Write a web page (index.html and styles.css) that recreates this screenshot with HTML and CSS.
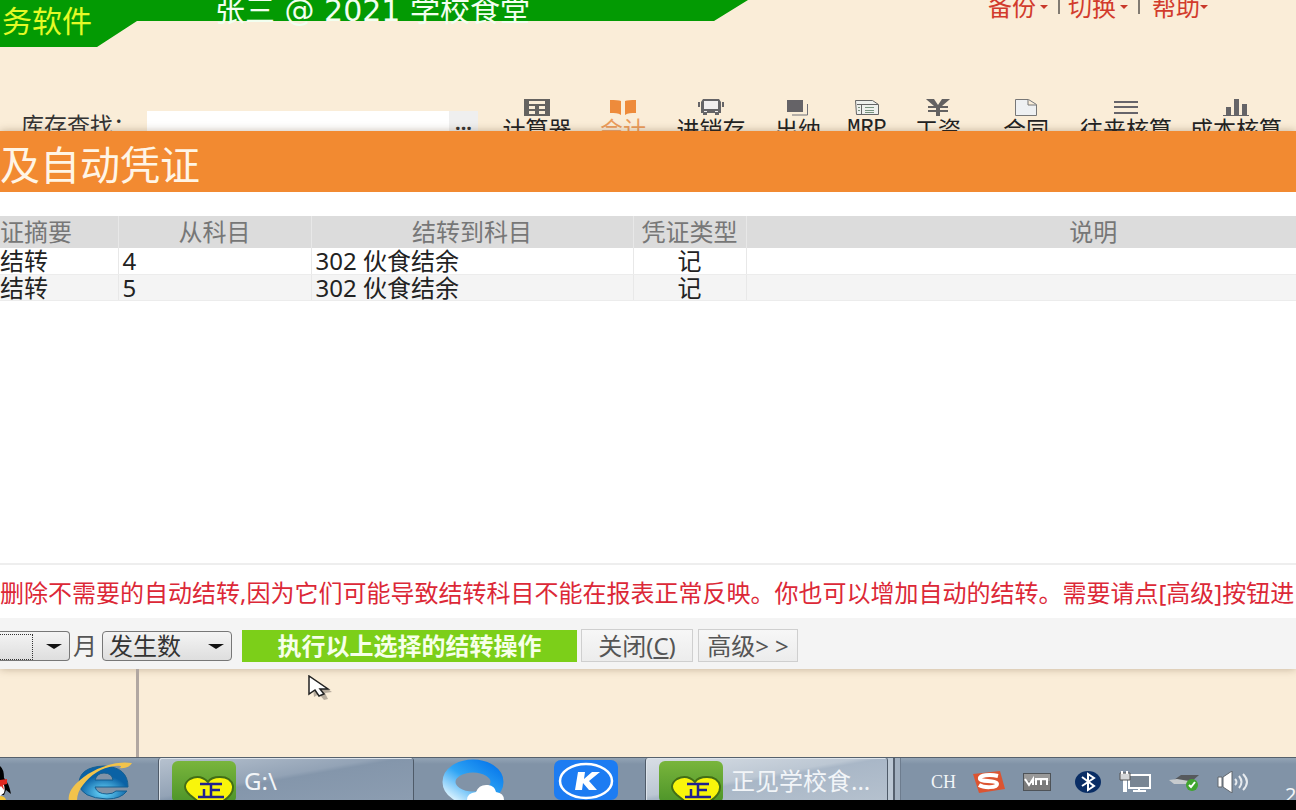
FILE: index.html
```html
<!DOCTYPE html>
<html lang="zh-CN">
<head>
<meta charset="utf-8">
<title>学校食堂财务软件</title>
<link rel="stylesheet" href="styles.css">
</head>
<body>
<div class="desktop">
  <header class="top">
    <div class="banner">
      <span class="brand">务软件</span>
      <span class="account">张三 @ 2021 学校食堂</span>
    </div>
    <nav class="links">
      <a href="#backup">备份<i class="caret"></i></a>
      <a href="#switch">切换<i class="caret"></i></a>
      <a href="#help">帮助<i class="caret"></i></a>
    </nav>
  </header>

  <div class="toolrow">
    <form class="search">
      <label for="stock">库存查找：</label>
      <input id="stock" type="text">
      <button type="button" class="more">...</button>
    </form>
    <nav class="modules">
      <a href="#calc"><svg width="26" height="17" viewBox="0 0 26 17"><path fill="#656360" d="M0 0h26v17H0z"/><path fill="#faedd8" d="M5 2h16v3H5zM5 7h6v3H5zM15 7h6v3h-6zM5 12h6v3H5zM15 12h6v3h-6z"/></svg><span>计算器</span></a>
      <a href="#acct" class="current"><svg width="26" height="17" viewBox="0 0 26 17"><path fill="#ee8b3b" d="M0 1c5 0 9 0 11 1v14c-3-2-6-2-11-2zM26 1c-5 0-9 0-11 1v14c3-2 6-2 11-2z"/></svg><span>会计</span></a>
      <a href="#stock"><svg width="26" height="17" viewBox="0 0 26 17"><path fill="#656467" d="M5 0h16l2 3v11h-2v2h-4v-2H9v2H5v-2H3V3zM0 3h2v5H0zM24 3h2v5h-2z"/><path fill="#f1eeee" d="M6 2h14v8H6zM6 12h3v1H6zM17 12h3v1h-3z"/></svg><span>进销存</span></a>
      <a href="#cash"><svg width="22" height="17" viewBox="0 0 22 17"><path fill="#656367" d="M0 1h16v12H0z"/><path fill="none" stroke="#707078" d="M20.500 5v11H5"/></svg><span>出纳</span></a>
      <a href="#mrp" class="mono"><svg width="24" height="17" viewBox="0 0 24 17"><path fill="#eef0ed" stroke="#656565" d="M.5 1.500h17l6 4v10h-22zM2 5.500h21M6.500 6v9"/><path stroke="#78937e" d="M3 8.500h2M3 11.500h2M10 8.500h9M10 11.500h9M10 13.500h9"/></svg><span>MRP</span></a>
      <a href="#wage"><svg width="24" height="17" viewBox="0 0 24 17"><path fill="#636161" d="M0 0h8l4 6 4-6h8l-1 1-7 6h6v2h-8v2h8v2h-8v4h-4v-4H2v-2h8V9H2V7h6L1 1z"/></svg><span>工资</span></a>
      <a href="#contract"><svg width="22" height="17" viewBox="0 0 22 17"><path fill="#eef0f2" stroke="#777" d="M.5.500h13l8 5v11H.500zM13 1v5h8"/></svg><span>合同</span></a>
      <a href="#contacts"><svg width="24" height="17" viewBox="0 0 24 17"><path stroke="#66646a" stroke-width="2" d="M0 3h24M0 8h24M0 14h24"/></svg><span>往来核算</span></a>
      <a href="#cost"><svg width="26" height="17" viewBox="0 0 26 17"><path fill="#656467" d="M0 16h26v1H0zM3 8h5v8H3zM11 0h5v16h-5zM19 5h5v11h-5z"/></svg><span>成本核算</span></a>
    </nav>
  </div>

  <main class="dialog">
    <h1>及自动凭证</h1>
    <div class="grid">
      <table>
        <colgroup><col class="c-brief"><col class="c-from"><col class="c-to"><col class="c-type"><col></colgroup>
        <thead><tr><th class="first">证摘要</th><th>从科目</th><th>结转到科目</th><th>凭证类型</th><th>说明</th></tr></thead>
        <tbody>
          <tr><td class="first">结转</td><td>4</td><td>302 伙食结余</td><td class="mid">记</td><td></td></tr>
          <tr><td class="first">结转</td><td>5</td><td>302 伙食结余</td><td class="mid">记</td><td></td></tr>
        </tbody>
      </table>
    </div>
    <p class="note">删除不需要的自动结转,因为它们可能导致结转科目不能在报表正常反映。你也可以增加自动的结转。需要请点[高级]按钮进</p>
    <div class="actions">
      <span class="picker month"><select id="month"><option></option></select></span>
      <label for="month">月</label>
      <span class="picker kind"><select aria-label="取数方式"><option>发生数</option></select></span>
      <button type="button" class="run">执行以上选择的结转操作</button>
      <button type="button" class="plain close">关闭(<u>C</u>)</button>
      <button type="button" class="plain adv">高级&gt; &gt;</button>
    </div>
  </main>

  <section class="workspace">
    <div class="side"></div>
    <svg class="cursor" width="26" height="26" viewBox="0 0 26 26"><path fill="#8b8177" opacity=".6" d="M4 3l20 14-7 1 3 6-4 1-5-6-5 3z"/><path fill="#fff" stroke="#222" stroke-width="1.500" d="M1 1v18l6-4 4 6 5-2-4-5h8z"/></svg>
  </section>

  <footer class="taskbar">
    <svg class="penguin" width="12" height="43" viewBox="0 0 12 43"><path d="M0 8q4 3 4 12 5 5 7 16l-5-4-2 5H0z"/><path fill="#fff" d="M0 24h2q4 5 2 11l-4 3z"/><path fill="#e12920" d="M0 22l7-1v5l-4 1 1 5-3-4-1 1z"/><path fill="#f2c43b" d="M0 38q5 0 6 4H0z"/></svg>
    <svg class="ie" width="66" height="43" viewBox="0 0 66 43"><defs><radialGradient id="b" cy=".8"><stop stop-color="#6fdcff"/><stop offset="1" stop-color="#0b62a5"/></radialGradient></defs><path fill="url(#b)" stroke="#155f91" d="M60 29H27q2 7 12 7 6 0 9-3h11q-6 8-20 8Q13 40 11 26 11 9 36 8q24 1 24 21zM27 22h18q-1-7-9-7-7 0-9 7z"/><path fill="#f2c34b" d="M1 43Q-2 31 20 16 43 2 64 5q-3 6-13 5 6-3-5-2Q27 11 15 27 9 34 9 43z"/></svg>
    <button type="button" class="task folder">
      <svg width="64" height="42" viewBox="0 0 64 42"><use href="#zheng"/></svg><span>G:\</span>
    </button>
    <svg class="qb" width="64" height="42" viewBox="0 0 64 42"><defs><linearGradient id="q" x1="1" x2="0" y2="1"><stop stop-color="#0879ec"/><stop offset=".5" stop-color="#2ea4f4"/><stop offset="1" stop-color="#dff5ff"/></linearGradient></defs><ellipse cx="32" cy="24" rx="24" ry="16" fill="none" stroke="url(#q)" stroke-width="13"/><path fill="#fff" d="M26 42q0-7 9-8 3-8 12-7 7 1 8 7 8 1 8 8z"/></svg>
    <svg class="kk" width="64" height="42" viewBox="0 0 64 42"><rect y="2" width="64" height="40" rx="7" fill="#1d7cf2"/><ellipse cx="32" cy="23" rx="26" ry="17" fill="none" stroke="#fff" stroke-width="2.500"/><path fill="#fff" d="M24 14h7l-1 7 8-7h8L35 23l8 9h-8l-6-7-1 7h-7z"/></svg>
    <button type="button" class="task active">
      <svg width="64" height="42" viewBox="0 0 64 42"><defs><linearGradient id="g" x2="0" y2="1"><stop stop-color="#79b53c"/><stop offset="1" stop-color="#4d9429"/></linearGradient></defs><g id="zheng"><rect y="3" width="64" height="42" rx="6" fill="url(#g)"/><path fill="#f9f50b" stroke="#426e16" stroke-width="2" d="M36 24q-8-8-18-3-10 7 0 16l10 8h20q14-8 13-17-2-9-13-9-9 0-12 5z"/><path fill="none" stroke="#20208f" stroke-width="2.500" d="M28 26h22M39 26v13M39 32h9M32 31v8M26 39h26"/></g></svg><span>正见学校食...</span>
    </button>
    <div class="stack"></div>
    <div class="tray">
      <span class="lang">CH</span>
      <svg width="32" height="22" viewBox="0 0 32 22"><path fill="#dc5431" d="M0 3l27-3 5 18-26 4z"/><path fill="none" stroke="#fff" stroke-width="4" d="M25 5c-8-2-19-1-18 3 1 3 17 1 17 5 0 4-13 4-18 1"/></svg>
      <svg width="28" height="18" viewBox="0 0 28 18"><rect x=".5" y=".5" width="27" height="17" fill="#7b7b7b" stroke="#4e5358"/><path fill="#999" d="M1 1h26v7H1z"/><path fill="none" stroke="#fff" stroke-width="2" d="M2 6l4 6 4-6v6M13 12V6h5v6M18 6h6v6"/></svg>
      <svg class="bt" width="26" height="22" viewBox="0 0 26 22"><ellipse cx="13" cy="11" rx="13" ry="11" fill="#092d65"/><path fill="none" stroke="#fff" stroke-width="2" d="M7 6l12 9-6 4V3l6 4-12 8"/></svg>
      <svg width="32" height="22" viewBox="0 0 32 22"><path fill="#788593" stroke="#fff" stroke-width="2" d="M10 4h21v13H10z"/><path stroke="#fff" stroke-width="2" d="M20 17v3M14 20h13"/><path stroke="#fff" stroke-width="4" d="M6 9v12"/><path fill="#d4d7d9" stroke="#555" d="M1 2h10v7H1z"/><path stroke="#fff" stroke-width="2" d="M3 0v3M8 0v3"/></svg>
      <svg width="30" height="18" viewBox="0 0 30 18"><path fill="#56595c" d="M12 2h18l-8 7H2z"/><path fill="#c7cbce" d="M0 7l8-1 12 2-3 3H5z"/><circle cx="23" cy="12" r="6" fill="#40a52e"/><path fill="none" stroke="#fff" stroke-width="2" d="M20 12l2 2 4-5"/></svg>
      <svg width="32" height="22" viewBox="0 0 32 22"><path fill="#fff" stroke="#60666c" d="M1 6h4v10H1zM6 6l9-6v22l-9-6z"/><path fill="none" stroke="#e6eaee" stroke-width="2" d="M18 8q3 3 0 6M22 5q5 6 0 12M26 3q8 8 0 16"/></svg>
      <span class="clock">2</span>
    </div>
  </footer>
</div>
</body>
</html>
```

FILE: styles.css
```css
* { box-sizing: border-box; }

body {
  margin: 0;
  background: #000;
  font-family: "Noto Sans", "Noto Sans CJK SC", sans-serif;
  font-size: 24px;
  line-height: 24px;
  overflow: hidden;
}

a { color: inherit; text-decoration: none; }
svg { display: block; flex: none; }
button, input, select { font: inherit; color: inherit; }

.desktop {
  display: flex;
  flex-direction: column;
  height: 100vh;
  border-bottom: 10px solid #000;
  background: #faedd8;
}

/* Header */
.top {
  display: flex;
  justify-content: space-between;
  height: 98px;
  padding-right: 88px;
  overflow: hidden;
  white-space: nowrap;
}
.banner {
  position: relative;
  z-index: 0;
  display: flex;
  width: 748px;
  height: 48px;
}
.banner::before {
  content: "";
  position: absolute;
  inset: 0;
  z-index: -1;
  background: #039a03;
  clip-path: polygon(0 0, 100% 0, 714px 21px, 137px 21px, 97px 47px, 0 47px);
}
.brand {
  width: 215px;
  padding: 7px 0 0 2px;
  color: #e4fa26;
  font-size: 30px;
  font-family: "Noto Sans CJK SC", sans-serif;
}
.account {
  margin-top: -1px;
  color: #f2fff0;
  font-size: 30px;
  font-family: "DejaVu Sans", "Noto Sans CJK SC", sans-serif;
}
.links {
  display: flex;
  height: 14px;
  color: #d23b2c;
}
.links a {
  display: flex;
  align-items: center;
  gap: 4px;
  height: 14px;
  padding: 0 10px 0 8px;
  line-height: 0;
}
.links a + a { border-left: 2px solid #817b72; }
.links a:last-child { padding: 0 0 0 12px; gap: 0; }
.caret {
  border: 4px solid transparent;
  border-top-color: #c9392a;
  border-bottom: 0;
}

/* Search and modules */
.toolrow {
  display: flex;
  height: 33px;
  padding: 0 5px 0 21px;
  overflow: hidden;
}
.search {
  display: flex;
  width: 472px;
  padding: 13px 15px 0 0;
  color: #333;
  white-space: nowrap;
}
.search label { width: 126px; padding-top: 2px; font-size: 23px; }
.search input {
  flex: 1;
  min-width: 0;
  height: 24px;
  border: 0;
  background: #fff;
}
.more {
  width: 29px;
  height: 24px;
  padding: 0;
  border: 0;
  background: #efefef;
  font-size: 20px;
  font-weight: bold;
  line-height: 20px;
}
.modules {
  flex: 1;
  display: grid;
  grid-template-columns: 88fr 84fr 92fr 82fr 56fr 86fr 90fr 110fr 110fr;
  color: #222;
  font-size: 23px;
  line-height: 22px;
  white-space: nowrap;
}
.modules a {
  display: flex;
  flex-direction: column;
  align-items: center;
  gap: 2px;
  min-width: 0;
  padding-top: 1px;
}
.modules .current { color: #eb9c5c; }
.modules .mono { font-family: "Liberation Mono", monospace; font-size: 22px; }

/* Dialog */
.dialog {
  flex: 1;
  display: flex;
  flex-direction: column;
  min-height: 0;
  background: #fff;
  box-shadow: 0 0 8px rgba(90, 60, 30, .35);
}
h1 {
  margin: 0;
  height: 61px;
  background: #f28a31;
  color: #fff5e6;
  font-size: 40px;
  font-weight: normal;
  line-height: 68px;
}
.grid {
  flex: 1;
  padding-top: 24px;
  border-bottom: 2px solid #eee;
  overflow: hidden;
}
table {
  width: calc(100% + 144px);
  table-layout: fixed;
  border-collapse: collapse;
  line-height: 26px;
  white-space: nowrap;
}
.c-brief { width: 118px; }
.c-from { width: 193px; }
.c-to { width: 322px; }
.c-type { width: 113px; }
th, td {
  padding: 0 4px;
  border-right: 1px solid #e8e8e8;
}
th {
  height: 32px;
  background: #dcdcdc;
  color: #777;
  font-weight: normal;
}
td { color: #222; border-bottom: 1px solid #ececec; height: 26px; line-height: 25px; }
th:last-child, td:last-child { border-right: 0; }
tbody tr:last-child { background: #f4f4f4; }
.first { padding-left: 0; text-align: left; }
.mid { text-align: center; }

.note {
  margin: 0;
  padding: 16px 0 13px;
  color: #dc2837;
  white-space: nowrap;
  overflow: hidden;
}
.actions {
  display: flex;
  align-items: center;
  height: 51px;
  padding-top: 4px;
  background: #f4f4f4;
  color: #555;
  white-space: nowrap;
}
.actions label { width: 32px; padding-left: 3px; }
.picker { position: relative; height: 30px; }
.picker::after {
  content: "";
  position: absolute;
  top: 13px;
  right: 8px;
  border: 8px solid transparent;
  border-top: 5px solid #111;
  border-bottom: 0;
  pointer-events: none;
}
.picker select {
  appearance: none;
  display: block;
  width: 100%;
  height: 30px;
  padding: 0 0 0 6px;
  border: 1px solid #777;
  border-radius: 4px;
  background: linear-gradient(#f4f4f4, #dedede);
  color: #333;
  line-height: 26px;
}
.month { width: 70px; }
.month select { border-left: 0; border-radius: 0 4px 4px 0; }
.month::before {
  content: "";
  position: absolute;
  top: 3px;
  left: 0;
  width: 32px;
  height: 24px;
  border: 1px dotted #333;
  border-left: 0;
}
.kind { width: 130px; margin-right: 10px; }
.run {
  width: 335px;
  height: 32px;
  padding: 0;
  border: 0;
  background: #7ccf19;
  color: #f6ffe9;
  font-weight: bold;
}
.plain {
  height: 33px;
  padding: 0;
  border: 1px solid #cfcfcf;
  background: linear-gradient(#f7f7f7, #ececec);
}
.close { width: 112px; margin: 0 5px 0 4px; }
.adv { width: 100px; }

/* Area under the dialog */
.workspace { position: relative; height: 88px; }
.side {
  width: 139px;
  height: 100%;
  border-right: 3px solid #b1a7a1;
}
.cursor { position: absolute; top: 6px; left: 308px; }

/* Taskbar */
.taskbar {
  display: flex;
  height: 43px;
  border-top: 1px solid #56616c;
  background: linear-gradient(#93a4b5, #8193a7 6px);
  color: #f2f5f8;
  overflow: hidden;
  white-space: nowrap;
}
.ie { margin: 0 24px 0 56px; }
.task {
  display: flex;
  align-items: center;
  gap: 8px;
  padding: 0 0 0 13px;
  border: 1px solid #4f5b69;
  border-width: 0 1px;
  border-radius: 3px 3px 0 0;
  box-shadow: inset 1px 1px 0 #dde4eb;
  overflow: hidden;
}
.task span { padding-top: 4px; }
.folder {
  width: 256px;
  background: linear-gradient(170deg, #b7c2cf, #93a3b6 45%, #8496ab 50%, #8c9db1);
}
.active {
  width: 243px;
  background: linear-gradient(170deg, #d8dee5, #bcc7d3 45%, #a9b7c7 50%, #b5c1ce);
}
.qb { margin: 0 49px 0 27px; }
.kk { margin-right: 27px; }
.stack {
  width: 13px;
  border-right: 1px solid #6d7c8e;
  background: linear-gradient(90deg, #bcc8d4 5px, #56616e 5px, #56616e 7px, #a3b1c0 7px);
}
.tray {
  flex: 1;
  display: flex;
  align-items: center;
  gap: 18px;
  min-width: 0;
  padding: 5px 0 0 30px;
}
.lang { width: 24px; font: 18px/20px "Liberation Serif", serif; }
.bt { margin-left: 6px; }
.clock { align-self: flex-end; margin-left: 18px; height: 15px; font-size: 20px; line-height: 20px; }
```
